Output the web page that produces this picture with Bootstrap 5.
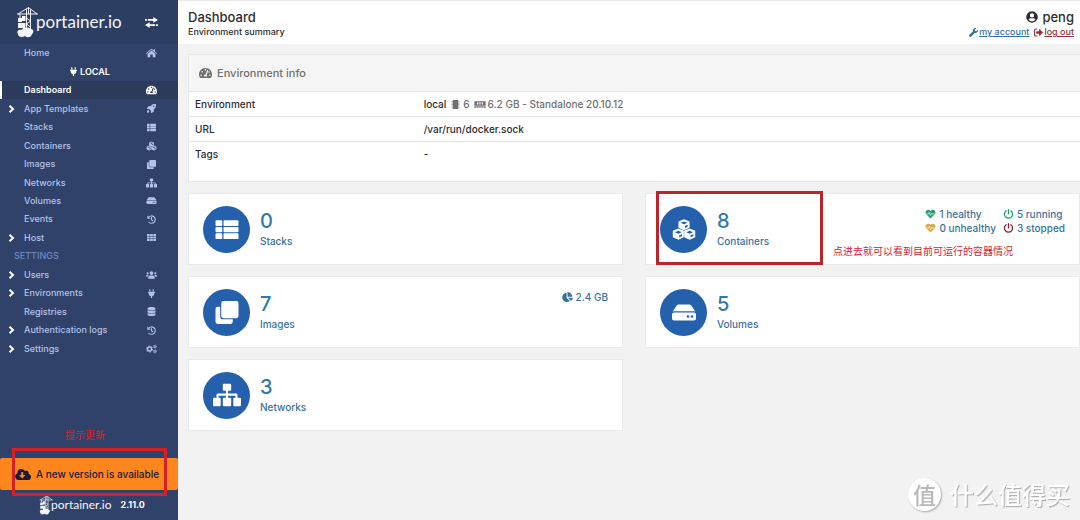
<!DOCTYPE html>
<html lang="en">
<head>
<meta charset="utf-8">
<meta name="viewport" content="width=device-width, initial-scale=1">
<title>Portainer | Dashboard</title>
<link href="https://cdn.jsdelivr.net/npm/bootstrap@5.3.0/dist/css/bootstrap.min.css" rel="stylesheet">
<style>
  body { font-family: Inter, "Noto Sans CJK SC", sans-serif; font-size: 10px; line-height: 14px; font-weight: 500; color: #2d2d2d; background: #f2f2f2; }
  svg { display: block; flex: none; fill: currentColor; }
  .ico { width: 11px; height: 10px; }
  .ico-sm { width: 11px; height: 9px; }
  .side { width: 178px; background: #30426a; color: #b4c2e8; font-size: 9px; }
  .side-head { height: 44px; background: #2d3e63; padding: 0 20px 0 16px; }
  .brand { color: #f4f6fb; font-family: Lato, sans-serif; font-weight: 400; text-decoration: none; }
  .brand-lg { font-size: 17px; line-height: 24px; }
  .brand-sm { font-size: 12px; line-height: 16px; }
  .crane-lg { width: 24px; height: 32px; margin-right: -4px; }
  .crane-sm { width: 15px; height: 20px; margin-right: -3px; }
  .menu { height: 314px; grid-auto-rows: 1fr; }
  .menu li { display: grid; }
  .menu a, .menu .env { display: flex; align-items: center; color: inherit; text-decoration: none; padding-right: 21px; }
  .menu a > span { flex: 1; }
  .menu .arrow { width: 24px; color: #fff; padding-left: 8px; flex: none; }
  .menu .arrow svg { width: 7px; height: 8px; }
  .menu a.current { background: #2c3b5c; color: #fff; font-weight: 600; border-left: 2px solid #fff; }
  .menu a.current .arrow { width: 22px; }
  .menu .env { color: #fff; font-weight: 600; justify-content: center; padding: 0; gap: 1px; }
  .menu .title { color: #6d87c4; align-self: center; padding-left: 14px; }
  .update { background: #ff861d; color: #1b1b33; border: 0; border-radius: 2px; height: 32px; font-size: 10px; font-weight: 500; padding: 0 0 0 15px; gap: 5px; }
  .mark-box { position: absolute; border: 3px solid #d42027; pointer-events: none; }
  .mark-update { left: 12px; right: 11px; top: -10px; bottom: -6px; }
  .mark-card { left: 10px; width: 167px; top: -3px; bottom: -1px; border-color: #be2329; }
  .note { color: #d3232f; font-size: 10px; font-weight: 400; font-family: "Noto Sans CJK SC", sans-serif; white-space: nowrap; }
  .foot { height: 30px; gap: 9px; padding-left: 39px; font-weight: 700; color: #fff; }
  .top { height: 44px; background: #fff; border-top: 1px solid #e6e6e6; padding: 8px 6px 0 10px; }
  .fs-head { font-size: 13px; line-height: 16px; }
  .crumb { font-size: 9px; }
  .top a { display: inline-flex; align-items: center; }
  .acct { color: #337099; }
  .leave { color: #933038; }
  .content { padding: 10px 0 0 10px; }
  .panel { background: #fff; border: 1px solid #e9e9e9; border-right: 0; }
  .panel-top { height: 36px; background: #f5f5f5; color: #707070; font-size: 11px; padding-left: 10px; gap: 5px; }
  .info { margin: 0; --bs-table-bg: #fff; --bs-table-color: #2d2d2d; border-color: #e3e3e3; }
  .info tr > * { padding: 5px 6px; font-weight: 500; border-width: 1px 0 0; }
  .info th { width: 26%; }
  .info tr > td { padding-left: 3px; }
  .info tr:last-child > * { padding-bottom: 20px; }
  .info .dim { color: #707070; gap: 2px; }
  .tiles { display: grid; grid-template-columns: 1fr 1fr; gap: 11px 22px; margin-top: 11px; }
  .tile { min-height: 72px; background: #fff; border: 1px solid #eaeaea; padding: 0 14px; position: relative; color: #39729d; text-decoration: none; gap: 10px; }
  .disc { width: 47px; height: 47px; background: #2460ac; color: #fff; flex: none; }
  .disc svg { width: 24px; height: 23px; }
  .disc svg.wide { width: 28px; height: 28px; }
  .num { font-size: 20px; line-height: 24px; font-weight: 500; color: #3279a8; }
  .lbl { line-height: 16px; }
  .extra { margin: 13px 0 0 auto; align-self: flex-start; white-space: nowrap; }
  .extra-wide { width: 232px; }
  .stats { display: grid; grid-template-columns: auto auto; justify-content: end; column-gap: 7px; margin-bottom: 9px; }
  .item { display: flex; align-items: center; gap: 3px; }
  .wm { position: fixed; right: 10px; bottom: 9px; gap: 9px; color: #fff; font: 500 24px/34px "Noto Sans CJK SC", sans-serif; text-shadow: 1px 1px 1px #aaa; pointer-events: none; }
  .wm-disc { width: 33px; height: 33px; background: #fff; color: #b9b9b9; font-size: 23px; line-height: 32px; box-shadow: 1px 1px 2px #aaa; text-shadow: none; }
</style>
</head>
<body>
<svg width="0" height="0" class="position-absolute" aria-hidden="true">
  <symbol id="home" viewBox="0 0 576 512"><path d="M288 32 0 272l28 34L288 90l260 216 28-34-104-87V56h-72v69zM288 130 80 303v161q0 16 16 16h128V336h128v144h128q16 0 16-16V303z"/></symbol>
  <symbol id="plug" viewBox="0 0 384 512"><path d="M256 144V32c0-17.700 14.300-32 32-32s32 14.300 32 32v112h-64zm112 16H16c-8.800 0-16 7.200-16 16v32c0 8.800 7.200 16 16 16h16v32c0 77.400 55 142 128 156.800V512h64v-99.200c73-14.800 128-79.400 128-156.800v-32h16c8.800 0 16-7.200 16-16v-32c0-8.800-7.200-16-16-16zm-240-16V32c0-17.700-14.300-32-32-32S64 14.300 64 32v112h64z"/></symbol>
  <symbol id="tach" viewBox="0 0 576 512"><path fill-rule="evenodd" d="M288 32C129 32 0 161 0 320c0 53 14 102 39 145 6 9 16 15 27 15h444c11 0 21-6 27-15 25-43 39-92 39-145C576 161 447 32 288 32zm0 52a34 34 0 1 1 0 68 34 34 0 0 1 0-68zM96 394a34 34 0 1 1 0-68 34 34 0 0 1 0 68zm48-156a34 34 0 1 1 0-68 34 34 0 0 1 0 68zm264-78-65 180c18 24 12 60-4 76H237c-32-44 0-100 52-96l70-178c12-26 58-12 49 18zm72 234a34 34 0 1 1 0-68 34 34 0 0 1 0 68zm-36-150a32 32 0 1 1 0-64 32 32 0 0 1 0 64z"/></symbol>
  <symbol id="rocket" viewBox="0 0 512 512"><path fill-rule="evenodd" d="M505 19c-3-7-6-10-13-12-90-18-178-8-253 76l-34 42H94c-15 0-28 8-34 20L3 261c-9 18 2 27 13 27h108l100 100v108c0 12 13 22 27 13l116-57c13-6 20-19 20-34V307l42-34c83-75 93-163 76-254zM384 168a40 40 0 1 1 0-80 40 40 0 0 1 0 80zM36 350c42-42 122 40 80 116-26 24-76 30-116 30 0-60 8-114 36-146z"/></symbol>
  <symbol id="list" viewBox="0 0 512 512"><path d="M24 48h108q18 0 18 20v94q0 16-18 16H24q-24 0-24-16V68q0-20 24-20zm172 0h292q24 0 24 20v94q0 16-24 16H196q-18 0-18-16V68q0-20 18-20zM24 200h108q18 0 18 16v84q0 16-18 16H24q-24 0-24-16v-84q0-16 24-16zm172 0h292q24 0 24 16v84q0 16-24 16H196q-18 0-18-16v-84q0-16 18-16zM24 338h108q18 0 18 16v94q0 20-18 20H24q-24 0-24-20v-94q0-16 24-16zm172 0h292q24 0 24 16v94q0 20-24 20H196q-18 0-18-20v-94q0-16 18-16z"/></symbol>
  <symbol id="cubes" viewBox="0 0 512 512"><path d="M256 30l112 42q12 5 12 18v116q0 12-12 18l-112 48-112-48q-12-6-12-18V90q0-13 12-18zM130 236l112 44q10 5 10 18v116q0 12-12 18l-110 50-112-50q-12-6-12-18V298q0-13 12-18zM382 236l112 44q12 5 12 18v116q0 12-12 18l-112 50-110-50q-12-6-12-18V298q0-13 10-18z"/><path fill="var(--cut,#2460ac)" d="M256 78l78 30-78 32-78-32zM276 176l62-26v44l-62 28zM130 286l76 30-76 32-76-32zM150 386l62-26v42l-62 30zM382 286l76 30-76 32-76-32zM402 386l62-26v42l-62 30z"/></symbol>
  <symbol id="clone" viewBox="0 0 512 512"><path d="M176 0h288q48 0 48 48v288q0 48-48 48H176q-48 0-48-48V48q0-48 48-48zM48 128h56v216q0 64 64 64h216v56q0 48-48 48H48q-48 0-48-48V176q0-48 48-48z"/></symbol>
  <symbol id="map" viewBox="0 0 640 512"><path d="M248 0h144q24 0 24 24v112q0 24-24 24h-48v64h184q32 0 32 32v64h56q24 0 24 24v144q0 24-24 24H488q-24 0-24-24V344q0-24 24-24h24v-48H344v48h48q24 0 24 24v144q0 24-24 24H248q-24 0-24-24V344q0-24 24-24h48v-48H128v48h24q24 0 24 24v144q0 24-24 24H24q-24 0-24-24V344q0-24 24-24h56v-64q0-32 32-32h184v-64h-48q-24 0-24-24V24q0-24 24-24z"/></symbol>
  <symbol id="hdd" viewBox="0 0 576 512"><path fill-rule="evenodd" d="M576 304v96c0 26.500-21.500 48-48 48H48c-26.500 0-48-21.500-48-48v-96c0-26.500 21.500-48 48-48h480c26.500 0 48 21.500 48 48zm-48-80a80 80 0 0 1 30.800 6.200L462 85.400A48 48 0 0 0 422 64H154a48 48 0 0 0-40 21.400L17.200 230.200A80 80 0 0 1 48 224h480zm-48 96a32 32 0 1 0 0 64 32 32 0 0 0 0-64zm-96 0a32 32 0 1 0 0 64 32 32 0 0 0 0-64z"/></symbol>
  <symbol id="hist" viewBox="0 0 512 512"><path fill="none" stroke="currentColor" stroke-width="62" stroke-linecap="round" stroke-linejoin="round" d="M92 132a210 210 0 1 1 22 282M256 148v124l70 54"/><path d="M16 30v166q0 20 20 20h166z"/></symbol>
  <symbol id="th" viewBox="0 0 512 512"><path d="M0 50h150v120H0zm181 0h150v120H181zm181 0h150v120H362zM0 196h150v120H0zm181 0h150v120H181zm181 0h150v120H362zM0 342h150v120H0zm181 0h150v120H181zm181 0h150v120H362z"/></symbol>
  <symbol id="users" viewBox="0 0 640 512"><circle cx="320" cy="144" r="108"/><circle cx="96" cy="160" r="64"/><circle cx="544" cy="160" r="64"/><path d="M128 480v-56q0-136 116-136h152q116 0 116 136v56zM0 352v-32q0-64 64-64h64q20 0 40 14-64 30-76 82zM640 352v-32q0-64-64-64h-64q-20 0-40 14 64 30 76 82z"/></symbol>
  <symbol id="db" viewBox="0 0 448 512"><path d="M448 73v46c0 40-100 73-224 73S0 159 0 119V73C0 33 100 0 224 0s224 33 224 73zm0 103v103c0 40-100 73-224 73S0 319 0 279V176c48 33 136 49 224 49s176-16 224-49zm0 160v103c0 40-100 73-224 73S0 479 0 439V336c48 33 136 49 224 49s176-16 224-49z"/></symbol>
  <symbol id="cogs" viewBox="0 0 640 512"><g fill="none" stroke="currentColor"><circle cx="205" cy="256" r="118" stroke-width="84"/><circle cx="205" cy="256" r="180" stroke-width="50" stroke-dasharray="94 94"/><circle cx="520" cy="116" r="56" stroke-width="54"/><circle cx="520" cy="116" r="96" stroke-width="36" stroke-dasharray="50 50"/><circle cx="520" cy="396" r="56" stroke-width="54"/><circle cx="520" cy="396" r="96" stroke-width="36" stroke-dasharray="50 50"/></g></symbol>
  <symbol id="chev" viewBox="0 0 7 8"><path fill="none" stroke="currentColor" stroke-width="2" d="M1.500.8 5 4 1.500 7.200"/></symbol>
  <symbol id="swap" viewBox="0 0 14 12"><path d="M0 2.200h2v2H0zM3 2.200h6V0l5 3.200-5 3.200V4.200H3zM14 7.800h-2v2h2zM11 7.800H5V5.600L0 8.800 5 12V9.800h6z"/></symbol>
  <symbol id="cloud" viewBox="0 0 640 512"><path fill-rule="evenodd" d="M538 227A96 96 0 0 0 395 115 160 160 0 0 0 96 203 144 144 0 0 0 144 480h368a128 128 0 0 0 26-253zM404 300 299 406q-11 10-22 0L172 300c-10-10-3-28 11-28h65V176q0-16 16-16h48q16 0 16 16v96h65c14 0 21 18 11 28z"/></symbol>
  <symbol id="user" viewBox="0 0 496 512"><path fill-rule="evenodd" d="M248 8a248 248 0 1 0 0 496 248 248 0 0 0 0-496zm0 90a92 92 0 1 1 0 184 92 92 0 0 1 0-184zm0 346q-86 0-148-72c22-42 62-66 110-64q38 12 76 0c48-2 88 22 110 64q-62 72-148 72z"/></symbol>
  <symbol id="wrench" viewBox="0 0 512 512"><path d="M508 109c-2-9-14-12-20-5l-75 74-68-11-11-68 74-75c7-6 4-17-5-20-48-11-100 1-137 38-40 40-50 97-34 147L19 403a64 64 0 0 0 90 90l213-213c50 17 108 6 148-34 37-37 50-89 38-137z"/></symbol>
  <symbol id="out" viewBox="0 0 512 512"><path d="M497 273 329 441c-15 15-41 4-41-17v-96H152q-24 0-24-24v-96q0-24 24-24h136V88c0-21 26-32 41-17l168 168c9 9 9 25 0 34zM192 436v40q0 12-12 12H96q-96 0-96-96V120q0-96 96-96h84q12 0 12 12v40q0 12-12 12H96q-32 0-32 32v272q0 32 32 32h84q12 0 12 12z"/></symbol>
  <symbol id="chip" viewBox="0 0 512 512"><path d="M128 0h256q32 0 32 32v448q0 32-32 32H128q-32 0-32-32V32q0-32 32-32zM36 70h44v40H36zm0 84h44v40H36zm0 84h44v40H36zm0 84h44v40H36zm0 84h44v40H36zM432 70h44v40h-44zm0 84h44v40h-44zm0 84h44v40h-44zm0 84h44v40h-44zm0 84h44v40h-44z"/></symbol>
  <symbol id="mem" viewBox="0 0 640 448"><path fill-rule="evenodd" d="M0 64h640v64q-40 28 0 70v122H0V198q40-42 0-70zm150 64v128h70V128zm134 0v128h70V128zm136 0v128h70V128zM0 352h640v80H0zm120 30v50h40v-50zm120 0v50h40v-50zm120 0v50h40v-50zm120 0v50h40v-50z"/></symbol>
  <symbol id="pie" viewBox="0 0 544 512"><path d="M528 288H290l158 158c6 6 16 7 22 1 39-37 66-86 74-141 1-10-7-18-16-18zm-16-65C504 104 408 8 289 0c-9 0-17 7-17 16v224h224c9 0 17-8 16-17zM224 288V51c0-10-8-18-18-16C87 51-4 156 0 280c5 128 115 233 243 232 50-1 97-17 135-44 8-6 9-17 2-24z"/></symbol>
  <symbol id="heart" viewBox="0 0 512 512"><path d="M256 490 36 264C-60 150 60-10 200 46l56 52 56-52c140-56 260 104 164 218z"/><path fill="none" stroke="#fff" stroke-width="32" d="M20 258h134l38-90 62 170 58-120 24 40h156"/></symbol>
  <symbol id="power" viewBox="0 0 512 512"><path fill="none" stroke="currentColor" stroke-width="68" stroke-linecap="round" d="M136 92a208 208 0 1 0 240 0M256 38v210"/></symbol>
  <symbol id="crane" viewBox="0 0 24 32"><path fill="none" stroke="currentColor" stroke-width="1" d="M2 8 12.500 1.500 21 8M1 8h21M10.500 3v20M14.500 3v20M10.500 12l4 3-4 3 4 3M4 8v4M12.500 1v7"/><path d="M2 12h4v4H2zM6 10h3.500v5H6zM2 17h7.500v5H2zM6 24a3 3 0 0 1 4-2 4 4 0 0 1 5 1c3 0 3 4 1 5-1 4-5 4-7 2-3 2-7 1-7-2-2-3 1-5 4-4z"/></symbol>
</svg>

<div class="d-flex min-vh-100">
  <aside class="side d-flex flex-column flex-shrink-0">
    <div class="side-head d-flex align-items-center justify-content-between">
      <a href="#" class="brand brand-lg d-flex align-items-center"><svg class="crane-lg"><use href="#crane"/></svg>portainer.io</a>
      <svg width="13" height="11" class="text-white"><use href="#swap"/></svg>
    </div>
    <nav aria-label="Main">
      <ul class="menu list-unstyled d-grid m-0">
        <li><a href="#"><i class="arrow"></i><span>Home</span><svg class="ico"><use href="#home"/></svg></a></li>
        <li><div class="env"><svg class="ico-sm"><use href="#plug"/></svg>LOCAL</div></li>
        <li><a href="#" class="current" aria-current="page"><i class="arrow"></i><span>Dashboard</span><svg class="ico"><use href="#tach"/></svg></a></li>
        <li><a href="#"><i class="arrow"><svg><use href="#chev"/></svg></i><span>App Templates</span><svg class="ico-sm"><use href="#rocket"/></svg></a></li>
        <li><a href="#"><i class="arrow"></i><span>Stacks</span><svg class="ico-sm"><use href="#list"/></svg></a></li>
        <li><a href="#" style="--cut:#30426a"><i class="arrow"></i><span>Containers</span><svg class="ico"><use href="#cubes"/></svg></a></li>
        <li><a href="#"><i class="arrow"></i><span>Images</span><svg class="ico-sm"><use href="#clone"/></svg></a></li>
        <li><a href="#"><i class="arrow"></i><span>Networks</span><svg class="ico"><use href="#map"/></svg></a></li>
        <li><a href="#"><i class="arrow"></i><span>Volumes</span><svg class="ico-sm"><use href="#hdd"/></svg></a></li>
        <li><a href="#"><i class="arrow"></i><span>Events</span><svg class="ico-sm"><use href="#hist"/></svg></a></li>
        <li><a href="#"><i class="arrow"><svg><use href="#chev"/></svg></i><span>Host</span><svg class="ico-sm"><use href="#th"/></svg></a></li>
        <li><div class="title">SETTINGS</div></li>
        <li><a href="#"><i class="arrow"><svg><use href="#chev"/></svg></i><span>Users</span><svg class="ico"><use href="#users"/></svg></a></li>
        <li><a href="#"><i class="arrow"><svg><use href="#chev"/></svg></i><span>Environments</span><svg class="ico-sm"><use href="#plug"/></svg></a></li>
        <li><a href="#"><i class="arrow"></i><span>Registries</span><svg class="ico-sm"><use href="#db"/></svg></a></li>
        <li><a href="#"><i class="arrow"><svg><use href="#chev"/></svg></i><span>Authentication logs</span><svg class="ico-sm"><use href="#hist"/></svg></a></li>
        <li><a href="#"><i class="arrow"><svg><use href="#chev"/></svg></i><span>Settings</span><svg class="ico"><use href="#cogs"/></svg></a></li>
      </ul>
    </nav>
    <div class="mt-auto">
      <div class="note text-center pb-3 pe-2">提示更新</div>
      <div class="position-relative">
        <button type="button" class="update w-100 d-flex align-items-center text-nowrap"><svg width="16" height="13"><use href="#cloud"/></svg>A new version is available</button>
        <div class="mark-box mark-update"></div>
      </div>
      <div class="foot d-flex align-items-center">
        <a href="#" class="brand brand-sm d-flex align-items-center"><svg class="crane-sm"><use href="#crane"/></svg>portainer.io</a>2.11.0
      </div>
    </div>
  </aside>

  <main class="flex-grow-1">
    <header class="top d-flex justify-content-between">
      <div>
        <h1 class="fs-head fw-medium m-0">Dashboard</h1>
        <div class="crumb">Environment summary</div>
      </div>
      <div class="d-flex flex-column align-items-end">
        <div class="fs-head d-flex align-items-center gap-1"><svg width="12" height="12"><use href="#user"/></svg>peng</div>
        <div class="crumb d-flex gap-1">
          <a href="#" class="acct"><svg class="ico-sm"><use href="#wrench"/></svg>my account</a>
          <a href="#" class="leave"><svg class="ico-sm"><use href="#out"/></svg>log out</a>
        </div>
      </div>
    </header>

    <div class="content">
      <section class="panel">
        <div class="panel-top d-flex align-items-center"><svg width="13" height="12"><use href="#tach"/></svg>Environment info</div>
        <table class="table info">
          <tbody>
            <tr><th scope="row">Environment</th><td><div class="d-flex align-items-center gap-1"><span>local</span><span class="dim d-flex align-items-center"><svg class="ico-sm"><use href="#chip"/></svg>6</span><span class="dim d-flex align-items-center"><svg width="12" height="8"><use href="#mem"/></svg>6.2 GB - Standalone 20.10.12</span></div></td></tr>
            <tr><th scope="row">URL</th><td>/var/run/docker.sock</td></tr>
            <tr><th scope="row">Tags</th><td>-</td></tr>
          </tbody>
        </table>
      </section>

      <div class="tiles">
        <a href="#" class="tile d-flex align-items-center">
          <div class="disc rounded-circle d-flex align-items-center justify-content-center"><svg><use href="#list"/></svg></div>
          <div><div class="num">0</div><div class="lbl">Stacks</div></div>
        </a>
        <a href="#" class="tile d-flex align-items-center">
          <div class="disc rounded-circle d-flex align-items-center justify-content-center"><svg><use href="#cubes"/></svg></div>
          <div><div class="num">8</div><div class="lbl">Containers</div></div>
          <div class="extra extra-wide">
            <div class="stats">
              <span class="item"><svg class="ico" style="color:#2a9d78"><use href="#heart"/></svg>1 healthy</span>
              <span class="item"><svg class="ico" style="color:#23a073"><use href="#power"/></svg>5 running</span>
              <span class="item"><svg class="ico" style="color:#e0a64c"><use href="#heart"/></svg>0 unhealthy</span>
              <span class="item"><svg class="ico" style="color:#8f2030"><use href="#power"/></svg>3 stopped</span>
            </div>
            <div class="note">点进去就可以看到目前可运行的容器情况</div>
          </div>
          <div class="mark-box mark-card"></div>
        </a>
        <a href="#" class="tile d-flex align-items-center">
          <div class="disc rounded-circle d-flex align-items-center justify-content-center"><svg><use href="#clone"/></svg></div>
          <div><div class="num">7</div><div class="lbl">Images</div></div>
          <div class="extra item"><svg class="ico"><use href="#pie"/></svg>2.4 GB</div>
        </a>
        <a href="#" class="tile d-flex align-items-center">
          <div class="disc rounded-circle d-flex align-items-center justify-content-center"><svg><use href="#hdd"/></svg></div>
          <div><div class="num">5</div><div class="lbl">Volumes</div></div>
        </a>
        <a href="#" class="tile d-flex align-items-center">
          <div class="disc rounded-circle d-flex align-items-center justify-content-center"><svg class="wide"><use href="#map"/></svg></div>
          <div><div class="num">3</div><div class="lbl">Networks</div></div>
        </a>
      </div>
    </div>
  </main>
</div>
<div class="wm d-flex align-items-center"><span class="wm-disc rounded-circle text-center">值</span>什么值得买</div>
<script src="https://cdn.jsdelivr.net/npm/bootstrap@5.3.0/dist/js/bootstrap.bundle.min.js"></script>
</body>
</html>
